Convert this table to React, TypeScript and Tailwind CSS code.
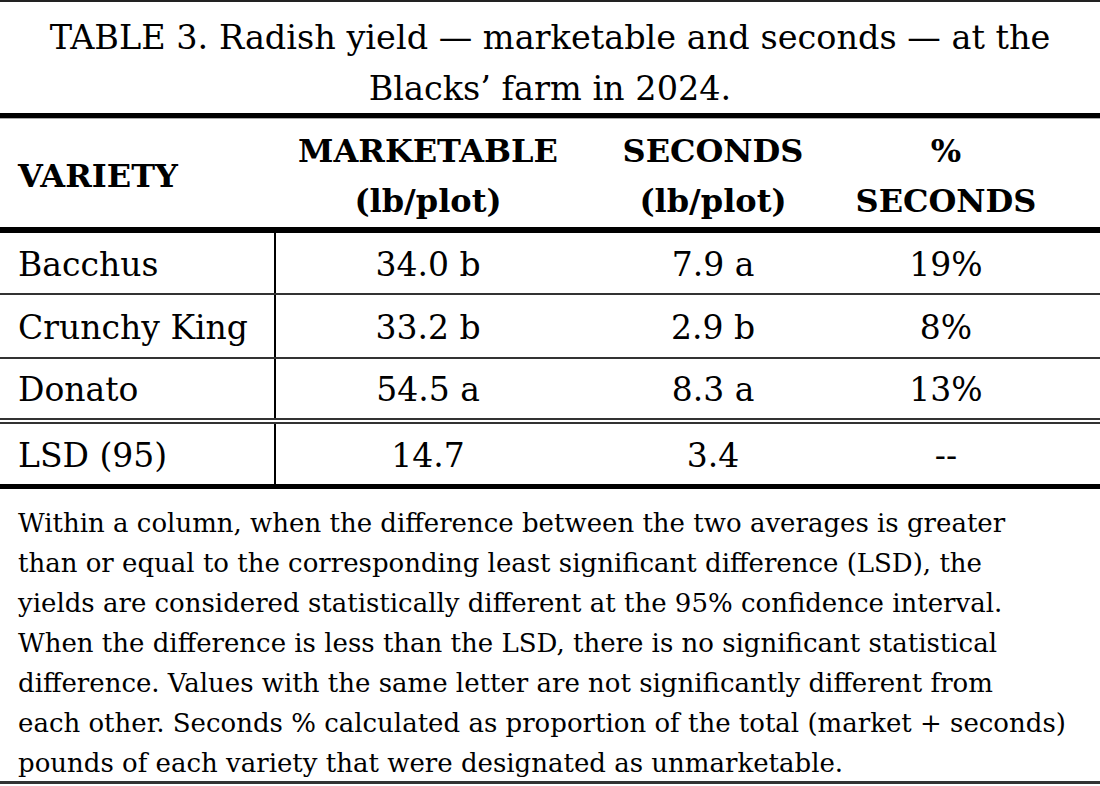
const rows = [
  { variety: 'Bacchus', marketable: '34.0 b', seconds: '7.9 a', pct: '19%' },
  { variety: 'Crunchy King', marketable: '33.2 b', seconds: '2.9 b', pct: '8%' },
  { variety: 'Donato', marketable: '54.5 a', seconds: '8.3 a', pct: '13%' },
];

const footnote = [
  'Within a column, when the difference between the two averages is greater',
  'than or equal to the corresponding least significant difference (LSD), the',
  'yields are considered statistically different at the 95% confidence interval.',
  'When the difference is less than the LSD, there is no significant statistical',
  'difference. Values with the same letter are not significantly different from',
  'each other. Seconds % calculated as proportion of the total (market + seconds)',
  'pounds of each variety that were designated as unmarketable.',
];

// row heights include the bottom rule
const rowHeights = ['h-[62px] border-b-2', 'h-[64px] border-b-2', 'h-[65px] border-b-[6px] border-double'];

const Row = ({ cells, className }: { cells: string[]; className: string }) => (
  <div className={`grid grid-cols-[276px_304px_266px_1fr] items-stretch ${className}`}>
    <div className="flex items-center border-r-2 border-black pt-[3px] pl-[18px]">{cells[0]}</div>
    <div className="flex items-center justify-center pt-[3px]">{cells[1]}</div>
    <div className="flex items-center justify-center pt-[3px]">{cells[2]}</div>
    <div className="flex items-center justify-center pt-[3px] pr-[54px]">{cells[3]}</div>
  </div>
);

export default function App() {
  return (
    <div className="h-[786px] w-[1100px] bg-white font-['DejaVu_Serif',serif] text-black">
      <div className="h-[2px] bg-[#222]" />

      <div className="flex h-[111px] items-center justify-center pt-[10px] text-center text-[33.5px] leading-[51px]">
        <p>
          TABLE 3. Radish yield — marketable and seconds — at the
          <br />
          Blacks’ farm in 2024.
        </p>
      </div>
      <div className="h-[5px] bg-black" />
      <div className="h-px bg-[#aaa]" />

      <div className="grid h-[108px] grid-cols-[276px_304px_266px_1fr] items-center pt-[5px] text-[32px] font-bold leading-[50px]">
        <div className="pl-[18px]">VARIETY</div>
        <div className="text-center">
          MARKETABLE
          <br />
          (lb/plot)
        </div>
        <div className="text-center">
          SECONDS
          <br />
          (lb/plot)
        </div>
        <div className="pr-[54px] text-center">
          %
          <br />
          SECONDS
        </div>
      </div>
      <div className="h-[6px] bg-black" />

      <div className="text-[33px]">
        {rows.map((r, i) => (
          <Row
            key={r.variety}
            cells={[r.variety, r.marketable, r.seconds, r.pct]}
            className={`${rowHeights[i]} border-[#333]`}
          />
        ))}
        <Row cells={['LSD (95)', '14.7', '3.4', '--']} className="h-[60px]" />
      </div>
      <div className="h-[5px] bg-black" />

      <div className="h-[292px] px-[18px] pt-[14px] text-[26px] leading-[40px]">
        <p className="whitespace-nowrap">
          {footnote.map((line, i) => (
            <span key={i}>
              {line}
              {i < footnote.length - 1 && <br />}
            </span>
          ))}
        </p>
      </div>
      <div className="h-[3px] bg-[#333]" />
    </div>
  );
}
